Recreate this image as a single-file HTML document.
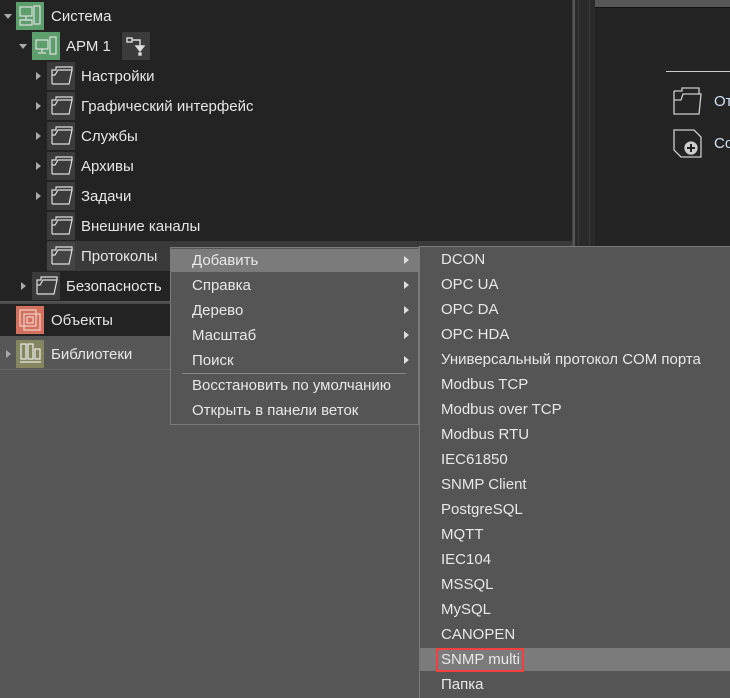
<!DOCTYPE html><html><head><meta charset="utf-8"><style>
body{margin:0;width:730px;height:697px;background:#575757;position:relative;overflow:hidden;font-family:"Liberation Sans","Noto Sans CJK SC",sans-serif;font-size:15px;color:#e6e6e6}
.a{position:absolute}
.t{position:absolute;white-space:nowrap;line-height:30px;margin-top:1px}
.ic{position:absolute;width:28px;height:28px}
.fo{background:#3b3b3b}
.tri{position:absolute;width:0;height:0;border-top:4px solid transparent;border-bottom:4px solid transparent;border-left:5px solid #aaa}
.dn{position:absolute;width:0;height:0;border-left:4px solid transparent;border-right:4px solid transparent;border-top:5px solid #aaa}
.m{position:absolute;white-space:nowrap;line-height:25px;color:#e8e8e8}
.ar{position:absolute;width:0;height:0;border-top:4px solid transparent;border-bottom:4px solid transparent;border-left:5px solid #ddd}
</style></head><body>
<div class="a" style="left:0;top:0;width:572px;height:301px;background:#232323;border-right:1px solid #444"></div>
<div class="a" style="left:47px;top:241px;width:525px;height:30px;background:#3a3a3a"></div>
<div class="a" style="left:0;top:302px;width:572px;height:2px;background:#4a4a4a"></div>
<div class="a" style="left:0;top:304px;width:572px;height:32px;background:#232323"></div>
<div class="a" style="left:0;top:369px;width:572px;height:1px;background:#666"></div>
<div class="a" style="left:575px;top:0;width:20px;height:247px;background:#2a2a2a"></div>
<div class="a" style="left:578px;top:0;width:1px;height:247px;background:#3a3a3a"></div>
<div class="a" style="left:589px;top:0;width:1px;height:247px;background:#3a3a3a"></div>
<div class="a" style="left:595px;top:0;width:135px;height:7px;background:#575757"></div>
<div class="a" style="left:595px;top:7px;width:135px;height:240px;background:#242424;border-top:1px solid #111"></div>
<div class="a" style="left:666px;top:71px;width:64px;height:1px;background:#ccc"></div>
<svg class="a" style="left:673px;top:86px" width="30" height="30" viewBox="0 0 30 30" fill="none" stroke="#ccc" stroke-width="1.3"><path d="M1 5h8v-3h17v6M1 5v23h25l2-20H10l-2 6H1"/></svg>
<div class="t" style="left:714px;top:86px;color:#cfe2f8">От</div>
<svg class="a" style="left:673px;top:129px" width="30" height="30" viewBox="0 0 30 30" fill="none" stroke="#ccc" stroke-width="1.3"><path d="M1 1h20l7 7v20H8L1 21z"/><circle cx="18" cy="19" r="6" fill="#ccc"/><path d="M18 15v8M14 19h8" stroke="#222" stroke-width="2"/></svg>
<div class="t" style="left:714px;top:128px;color:#cfe2f8">Со</div>

<div class="dn" style="left:4px;top:14px"></div>
<div class="ic" style="left:16px;top:2px;background:#5c9e6c"><svg width="28" height="28" fill="none" stroke="#ddd" stroke-width="1.2"><rect x="4" y="5" width="12" height="9"/><path d="M10 14v4M6 18h9"/><rect x="18" y="4" width="6" height="18"/><rect x="4" y="18" width="12" height="5"/></svg></div>
<div class="t" style="left:51px;top:1px">Система</div>
<div class="dn" style="left:19px;top:44px"></div>
<div class="ic" style="left:32px;top:32px;background:#5c9e6c"><svg width="28" height="28" fill="none" stroke="#ddd" stroke-width="1.2"><rect x="4" y="8" width="12" height="9"/><path d="M10 17v3M6 21h8"/><rect x="18" y="5" width="6" height="17"/></svg></div>
<div class="t" style="left:66px;top:31px">АРМ 1</div>
<div class="ic" style="left:122px;top:32px;background:#3b3b3b"><svg width="28" height="28" fill="none" stroke="#ddd" stroke-width="1.4"><rect x="5" y="6" width="5" height="4"/><path d="M10 8h8v6"/><path d="M14 14h8l-4 5z" fill="#ddd"/><rect x="17" y="21" width="2" height="2" fill="#ddd"/></svg></div>

<div class="tri" style="left:36px;top:72px"></div><div class="ic fo" style="left:47px;top:62px"></div><div class="t" style="left:81px;top:61px">Настройки</div>
<div class="tri" style="left:36px;top:102px"></div><div class="ic fo" style="left:47px;top:92px"></div><div class="t" style="left:81px;top:91px">Графический интерфейс</div>
<div class="tri" style="left:36px;top:132px"></div><div class="ic fo" style="left:47px;top:122px"></div><div class="t" style="left:81px;top:121px">Службы</div>
<div class="tri" style="left:36px;top:162px"></div><div class="ic fo" style="left:47px;top:152px"></div><div class="t" style="left:81px;top:151px">Архивы</div>
<div class="tri" style="left:36px;top:192px"></div><div class="ic fo" style="left:47px;top:182px"></div><div class="t" style="left:81px;top:181px">Задачи</div>
<div class="ic fo" style="left:47px;top:212px"></div><div class="t" style="left:81px;top:211px">Внешние каналы</div>
<div class="ic fo" style="left:47px;top:242px;background:#444"></div><div class="t" style="left:81px;top:241px">Протоколы</div>
<div class="tri" style="left:21px;top:282px"></div><div class="ic fo" style="left:32px;top:272px"></div><div class="t" style="left:66px;top:271px">Безопасность</div>
<svg class="a" style="left:0;top:0" width="80" height="300" fill="none" stroke="#ddd" stroke-width="1.2">
<g id="f"><path d="M52 84v-14h4v-3h16v3M52 84h17l3-14H58l-3 5h-3"/></g>
<use href="#f" y="30"/><use href="#f" y="60"/><use href="#f" y="90"/><use href="#f" y="120"/><use href="#f" y="150"/><use href="#f" y="180"/><use href="#f" x="-15" y="210"/>
</svg>
<div class="ic" style="left:16px;top:306px;background:#d4705e"><svg width="28" height="28" fill="none" stroke="#f0d0c8" stroke-width="1.2"><rect x="4" y="4" width="16" height="16"/><rect x="8" y="8" width="16" height="16"/><rect x="11" y="11" width="6" height="6"/></svg></div>
<div class="t" style="left:51px;top:305px">Объекты</div>
<div class="tri" style="left:6px;top:350px"></div>
<div class="ic" style="left:16px;top:340px;background:#85855f"><svg width="28" height="28" fill="none" stroke="#eee" stroke-width="1.2"><rect x="5" y="4" width="5" height="15"/><rect x="12" y="4" width="5" height="15"/><rect x="19" y="9" width="5" height="10"/><path d="M4 22h21"/></svg></div>
<div class="t" style="left:51px;top:339px">Библиотеки</div>

<div class="a" style="left:170px;top:247px;width:247px;height:176px;background:#555;border:1px solid #7a7a7a"></div>
<div class="a" style="left:171px;top:249px;width:247px;height:23px;background:#7b7b7b"></div>
<div class="m" style="left:192px;top:248px">Добавить</div><div class="ar" style="left:404px;top:256px"></div>
<div class="m" style="left:192px;top:273px">Справка</div><div class="ar" style="left:404px;top:281px"></div>
<div class="m" style="left:192px;top:298px">Дерево</div><div class="ar" style="left:404px;top:306px"></div>
<div class="m" style="left:192px;top:323px">Масштаб</div><div class="ar" style="left:404px;top:331px"></div>
<div class="m" style="left:192px;top:348px">Поиск</div><div class="ar" style="left:404px;top:356px"></div>
<div class="a" style="left:182px;top:373px;width:224px;height:1px;background:#888"></div>
<div class="m" style="left:192px;top:373px">Восстановить по умолчанию</div>
<div class="m" style="left:192px;top:398px">Открыть в панели веток</div>

<div class="a" style="left:419px;top:246px;width:311px;height:451px;background:#555;border-left:1px solid #7a7a7a;border-top:1px solid #7a7a7a"></div>
<div class="a" style="left:420px;top:648px;width:310px;height:23px;background:#7b7b7b"></div>
<div class="a" style="left:436px;top:648px;width:84px;height:20px;border:2px solid #f04040"></div>
<div class="m" style="left:441px;top:247px">DCON</div>
<div class="m" style="left:441px;top:272px">OPC UA</div>
<div class="m" style="left:441px;top:297px">OPC DA</div>
<div class="m" style="left:441px;top:322px">OPC HDA</div>
<div class="m" style="left:441px;top:347px">Универсальный протокол COM порта</div>
<div class="m" style="left:441px;top:372px">Modbus TCP</div>
<div class="m" style="left:441px;top:397px">Modbus over TCP</div>
<div class="m" style="left:441px;top:422px">Modbus RTU</div>
<div class="m" style="left:441px;top:447px">IEC61850</div>
<div class="m" style="left:441px;top:472px">SNMP Client</div>
<div class="m" style="left:441px;top:497px">PostgreSQL</div>
<div class="m" style="left:441px;top:522px">MQTT</div>
<div class="m" style="left:441px;top:547px">IEC104</div>
<div class="m" style="left:441px;top:572px">MSSQL</div>
<div class="m" style="left:441px;top:597px">MySQL</div>
<div class="m" style="left:441px;top:622px">CANOPEN</div>
<div class="m" style="left:441px;top:647px">SNMP multi</div>
<div class="m" style="left:441px;top:672px">Папка</div>
</body></html>
